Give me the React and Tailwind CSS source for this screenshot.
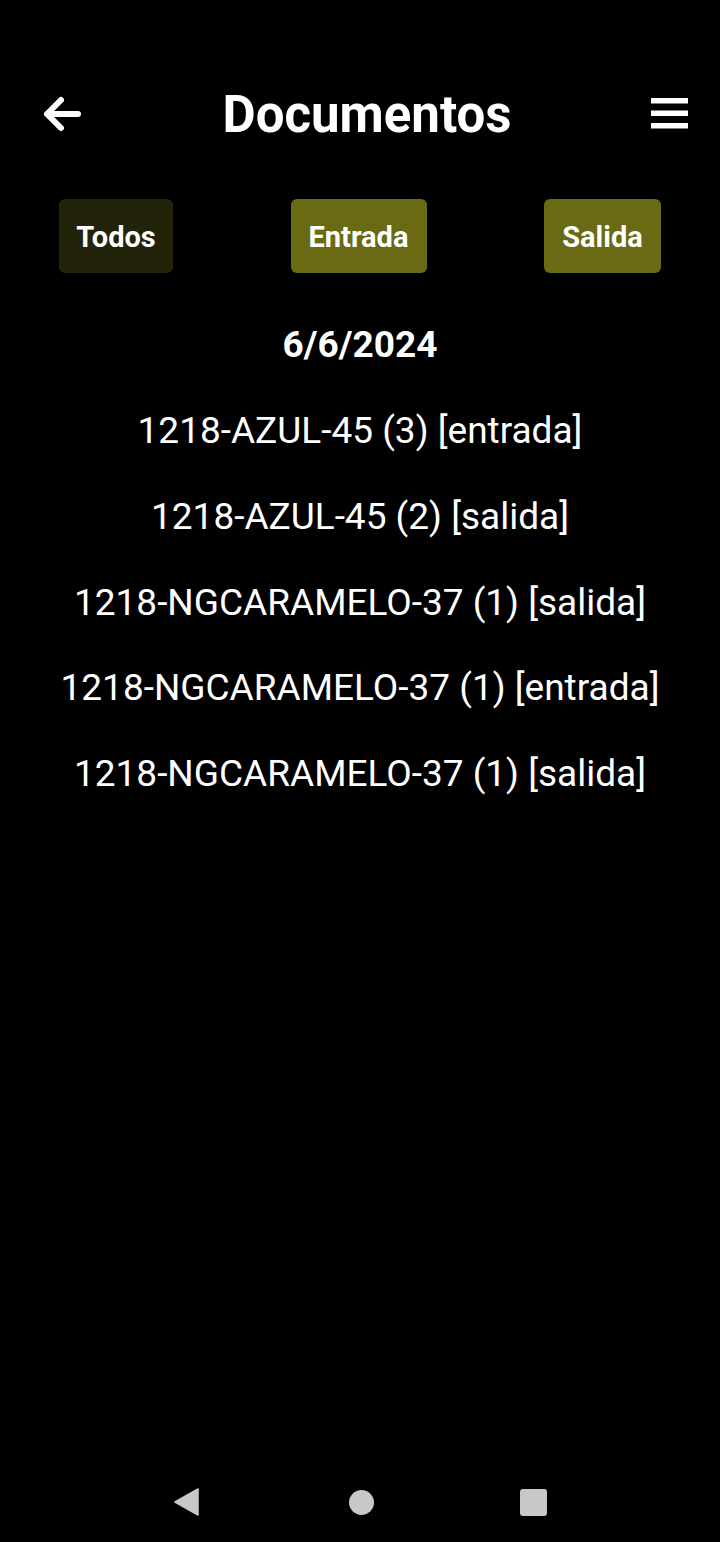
const items = [
  '1218-AZUL-45 (3) [entrada]',
  '1218-AZUL-45 (2) [salida]',
  '1218-NGCARAMELO-37 (1) [salida]',
  '1218-NGCARAMELO-37 (1) [entrada]',
  '1218-NGCARAMELO-37 (1) [salida]',
]

export default function App() {
  return (
    <div className="w-[720px] h-[1542px] bg-black text-white flex flex-col font-['Roboto',sans-serif]">
      {/* Header */}
      <div className="h-[230px] flex flex-col">
        <div className="mt-[86px] h-[56px] pl-[42px] pr-[30px] flex items-center justify-between">
          <svg width="42" height="40" viewBox="0 0 42 40" fill="none" stroke="white" strokeWidth="6" strokeLinecap="round" strokeLinejoin="round">
            <path d="M36 20H6M19 6L5 20l14 14" />
          </svg>
          <h1 className="text-[51px] font-bold leading-none">Documentos</h1>
          <svg width="40" height="34" viewBox="0 0 40 34" fill="white">
            <rect x="1" y="1" width="37" height="5.5" />
            <rect x="1" y="13.5" width="37" height="5.5" />
            <rect x="1" y="26" width="37" height="5.5" />
          </svg>
        </div>
      </div>

      {/* Filters */}
      <div className="-mt-[31px] flex items-center justify-between px-[59px]">
        <button className="w-[114px] h-[74px] pt-[4px] rounded-[6px] bg-[#222308] text-[29px] font-bold">Todos</button>
        <button className="w-[136px] h-[74px] pt-[4px] rounded-[6px] bg-[#6b6a14] text-[29px] font-bold">Entrada</button>
        <button className="w-[117px] h-[74px] pt-[4px] rounded-[6px] bg-[#6b6a14] text-[29px] font-bold">Salida</button>
      </div>

      {/* List */}
      <div className="mt-[50px] flex flex-col items-center">
        <div className="text-[37px] font-bold leading-[44px]">6/6/2024</div>
        <div className="mt-[42px] flex flex-col items-center gap-[41.75px]">
          {items.map((t, i) => (
            <div key={i} className="text-[37px] leading-[44px]">{t}</div>
          ))}
        </div>
      </div>

      <div className="flex-1" />

      {/* Nav bar */}
      <div className="h-[84px] pt-[4px] flex items-center justify-center">
        <div className="w-[373px] flex items-center justify-between">
          <svg width="25" height="28" viewBox="0 0 25 28" fill="#c8c8c8">
            <path d="M24 1L1 14 24 27z" strokeLinejoin="round" stroke="#c8c8c8" strokeWidth="1.5" />
          </svg>
          <div className="w-[25px] h-[25px] rounded-full bg-[#c8c8c8] ml-[4px]" />
          <div className="w-[27px] h-[27px] rounded-[3px] bg-[#c8c8c8]" />
        </div>
      </div>
    </div>
  )
}
